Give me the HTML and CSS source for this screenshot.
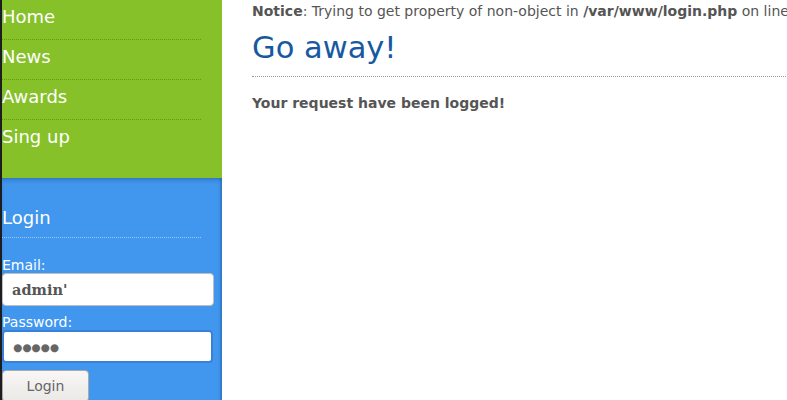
FILE: index.html
```html
<!DOCTYPE html>
<html>
<head>
<meta charset="utf-8">
<link rel="stylesheet" href="styles.css">
</head>
<body>
<div class="page">
  <aside class="sidebar">
    <ul class="menu">
      <li>Home</li>
      <li>News</li>
      <li>Awards</li>
      <li class="last">Sing up</li>
    </ul>
    <div class="login">
      <h2 class="login-title">Login</h2>
      <label class="lbl">Email:</label>
      <div class="input email">admin'</div>
      <label class="lbl">Password:</label>
      <div class="input pass">&#9679;&#9679;&#9679;&#9679;&#9679;</div>
      <div class="btn">Login</div>
    </div>
  </aside>
  <main class="main">
    <p class="notice"><b>Notice</b>: Trying to get property of non-object in <b>/var/www/login.php</b> on line</p>
    <h1 class="title">Go away!</h1>
    <hr class="rule">
    <p class="msg">Your request have been logged!</p>
  </main>
</div>
</body>
</html>
```

FILE: styles.css
```css
html, body {
  margin: 0;
  padding: 0;
  background: #fff;
  overflow: hidden;
}
body {
  font-family: "DejaVu Sans", sans-serif;
  color: #555;
}
.page {
  display: flex;
  width: 787px;
  height: 400px;
}
.sidebar {
  flex: 0 0 220px;
  border-left: 2px solid #1d1d1d;
  display: flex;
  flex-direction: column;
  background: #86c12a;
}
.menu {
  list-style: none;
  margin: 0;
  padding: 0;
  width: 199px;
  height: 178px;
  flex: 0 0 178px;
}
.menu li {
  color: #fff;
  font-size: 18px;
  line-height: 21px;
  padding: 6px 0 10px;
  border-bottom: 1px dotted #5e9a12;
  height: 23px;
}
.menu li.last {
  border-bottom: none;
}
.login {
  flex: 1;
  background: #4196ee;
  box-shadow: inset 0 4px 4px -2px rgba(30, 80, 140, 0.45), inset -2px 0 2px rgba(30, 80, 140, 0.35);
  padding-top: 29px;
}
.login-title {
  margin: 0;
  font-weight: normal;
  color: #fff;
  font-size: 18px;
  line-height: 21px;
  padding-bottom: 9px;
  width: 199px;
  border-bottom: 1px dotted #9ccaf6;
}
.lbl {
  display: block;
  color: #fff;
  font-size: 14px;
  line-height: 16px;
}
.login-title + .lbl {
  margin-top: 19px;
}
.input {
  box-sizing: border-box;
  width: 212px;
  height: 33px;
  background: #fff;
  border: 1px solid #bfbfbf;
  border-radius: 4px;
  padding: 0 9px;
  display: flex;
  align-items: center;
  margin-bottom: 8px;
}
.email {
  font-family: "DejaVu Serif", serif;
  font-weight: bold;
  font-size: 14.5px;
  color: #555;
}
.pass {
  width: 211px;
  height: 33px;
  border: 2px solid #3a80d9;
  font-size: 10.5px;
  color: #666;
  margin-bottom: 7px;
}
.btn {
  box-sizing: border-box;
  width: 87px;
  height: 32px;
  border: 1px solid #aaa;
  border-radius: 4px;
  background: linear-gradient(#f8f7f6, #ebe9e6);
  font-size: 14px;
  color: #666;
  display: flex;
  align-items: center;
  justify-content: center;
}
.main {
  flex: 1;
  padding-left: 30px;
  min-width: 0;
  overflow: hidden;
}
.notice {
  margin: 2px 0 0;
  font-size: 14px;
  line-height: 18px;
  white-space: nowrap;
  color: #555;
}
.title {
  margin: 9px 0 0;
  font-weight: normal;
  font-size: 30.5px;
  line-height: 38px;
  color: #1759a0;
}
.rule {
  margin: 9px 0 0;
  border: 0;
  border-top: 1px dotted #999;
  width: 560px;
}
.msg {
  margin: 17px 0 0;
  font-weight: bold;
  font-size: 14px;
  line-height: 18px;
}
```
